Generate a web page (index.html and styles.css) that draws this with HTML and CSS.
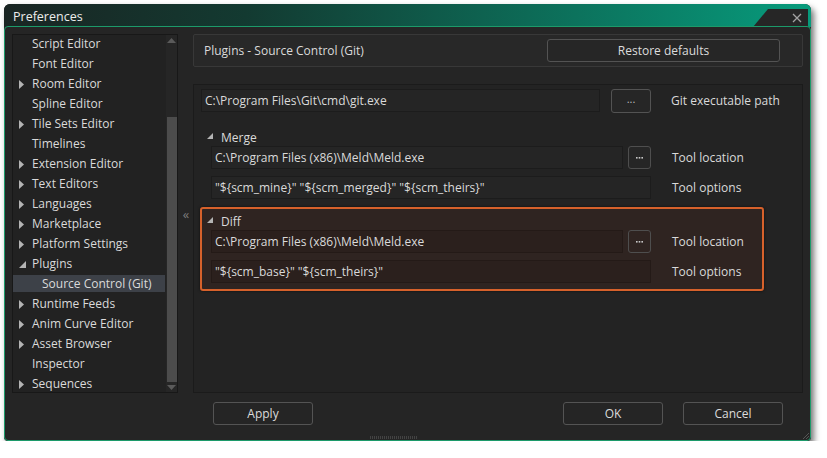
FILE: index.html
```html
<!DOCTYPE html>
<html>
<head>
<meta charset="utf-8">
<title>Preferences</title>
<link rel="stylesheet" href="styles.css">
</head>
<body>
<div class="window">
  <div class="titlebar">
    <span class="title">Preferences</span>
    <div class="close">
      <svg width="10" height="10" viewBox="0 0 10 10"><path d="M1 1L9 9M9 1L1 9" stroke="#a3a3a3" stroke-width="1.3" fill="none"/></svg>
    </div>
  </div>
  <div class="body">
    <div class="tree">
      <div class="tree-items">
        <div class="item"><span class="arr"></span>Script Editor</div>
        <div class="item"><span class="arr"></span>Font Editor</div>
        <div class="item"><span class="arr"><svg width="5" height="9" viewBox="0 0 5 9"><path d="M0 0L5 4.5L0 9Z" fill="#b4b4b4"/></svg></span>Room Editor</div>
        <div class="item"><span class="arr"></span>Spline Editor</div>
        <div class="item"><span class="arr"><svg width="5" height="9" viewBox="0 0 5 9"><path d="M0 0L5 4.5L0 9Z" fill="#b4b4b4"/></svg></span>Tile Sets Editor</div>
        <div class="item"><span class="arr"></span>Timelines</div>
        <div class="item"><span class="arr"><svg width="5" height="9" viewBox="0 0 5 9"><path d="M0 0L5 4.5L0 9Z" fill="#b4b4b4"/></svg></span>Extension Editor</div>
        <div class="item"><span class="arr"><svg width="5" height="9" viewBox="0 0 5 9"><path d="M0 0L5 4.5L0 9Z" fill="#b4b4b4"/></svg></span>Text Editors</div>
        <div class="item"><span class="arr"><svg width="5" height="9" viewBox="0 0 5 9"><path d="M0 0L5 4.5L0 9Z" fill="#b4b4b4"/></svg></span>Languages</div>
        <div class="item"><span class="arr"><svg width="5" height="9" viewBox="0 0 5 9"><path d="M0 0L5 4.5L0 9Z" fill="#b4b4b4"/></svg></span>Marketplace</div>
        <div class="item"><span class="arr"><svg width="5" height="9" viewBox="0 0 5 9"><path d="M0 0L5 4.5L0 9Z" fill="#b4b4b4"/></svg></span>Platform Settings</div>
        <div class="item"><span class="arr"><svg width="7" height="7" viewBox="0 0 7 7"><path d="M7 0L7 7L0 7Z" fill="#b4b4b4"/></svg></span>Plugins</div>
        <div class="item sub selected">Source Control (Git)</div>
        <div class="item"><span class="arr"><svg width="5" height="9" viewBox="0 0 5 9"><path d="M0 0L5 4.5L0 9Z" fill="#b4b4b4"/></svg></span>Runtime Feeds</div>
        <div class="item"><span class="arr"><svg width="5" height="9" viewBox="0 0 5 9"><path d="M0 0L5 4.5L0 9Z" fill="#b4b4b4"/></svg></span>Anim Curve Editor</div>
        <div class="item"><span class="arr"><svg width="5" height="9" viewBox="0 0 5 9"><path d="M0 0L5 4.5L0 9Z" fill="#b4b4b4"/></svg></span>Asset Browser</div>
        <div class="item"><span class="arr"></span>Inspector</div>
        <div class="item"><span class="arr"><svg width="5" height="9" viewBox="0 0 5 9"><path d="M0 0L5 4.5L0 9Z" fill="#b4b4b4"/></svg></span>Sequences</div>
      </div>
      <div class="scrollbar">
        <div class="sb-btn"><svg width="9" height="5" viewBox="0 0 9 5"><path d="M0 5L4.5 0L9 5Z" fill="#5a5a5a"/></svg></div>
        <div class="sb-track"><div class="sb-thumb"></div></div>
        <div class="sb-btn"><svg width="9" height="5" viewBox="0 0 9 5"><path d="M0 0L4.5 5L9 0Z" fill="#5a5a5a"/></svg></div>
      </div>
    </div>

    <div class="splitter">«</div>

    <div class="content">
      <div class="header">
        <span class="header-title">Plugins - Source Control (Git)</span>
        <div class="btn restore">Restore defaults</div>
      </div>
      <div class="panel">
        <div class="git-row">
          <div class="input git-input">C:\Program Files\Git\cmd\git.exe</div>
          <div class="btn dots-wide">...</div>
          <span class="label">Git executable path</span>
        </div>

        <div class="group">
          <div class="group-title"><svg width="6" height="6" viewBox="0 0 6 6"><path d="M6 0L6 6L0 6Z" fill="#b4b4b4"/></svg><span>Merge</span></div>
          <div class="group-row">
            <div class="field-wrap">
              <div class="input">C:\Program Files (x86)\Meld\Meld.exe</div>
              <div class="btn dots"><svg width="7" height="2" viewBox="0 0 7 2"><rect x="0" y="0" width="1.6" height="1.6" fill="#c8c8c8"/><rect x="2.7" y="0" width="1.6" height="1.6" fill="#c8c8c8"/><rect x="5.4" y="0" width="1.6" height="1.6" fill="#c8c8c8"/></svg></div>
            </div>
            <span class="label">Tool location</span>
          </div>
          <div class="group-row">
            <div class="field-wrap">
              <div class="input">"${scm_mine}" "${scm_merged}" "${scm_theirs}"</div>
            </div>
            <span class="label">Tool options</span>
          </div>
        </div>

        <div class="group diff">
          <div class="group-title"><svg width="6" height="6" viewBox="0 0 6 6"><path d="M6 0L6 6L0 6Z" fill="#b4b4b4"/></svg><span>Diff</span></div>
          <div class="group-row">
            <div class="field-wrap">
              <div class="input">C:\Program Files (x86)\Meld\Meld.exe</div>
              <div class="btn dots"><svg width="7" height="2" viewBox="0 0 7 2"><rect x="0" y="0" width="1.6" height="1.6" fill="#c8c8c8"/><rect x="2.7" y="0" width="1.6" height="1.6" fill="#c8c8c8"/><rect x="5.4" y="0" width="1.6" height="1.6" fill="#c8c8c8"/></svg></div>
            </div>
            <span class="label">Tool location</span>
          </div>
          <div class="group-row">
            <div class="field-wrap">
              <div class="input">"${scm_base}" "${scm_theirs}"</div>
            </div>
            <span class="label">Tool options</span>
          </div>
        </div>
      </div>
    </div>

    <div class="footer">
      <div class="btn foot apply">Apply</div>
      <div class="btn foot ok">OK</div>
      <div class="btn foot cancel">Cancel</div>
    </div>

    <div class="drag-handle"></div>
    <div class="grip"></div>
  </div>
</div>
</body>
</html>
```

FILE: styles.css
```css
* { box-sizing: border-box; }

html, body {
  margin: 0;
  padding: 0;
  background: #ffffff;
}

body {
  font-family: "Open Sans", "Noto Sans", "Liberation Sans", sans-serif;
  font-size: 12px;
  color: #dadada;
}

.window {
  margin: 4px 0 0 4px;
  width: 807px;
  border-radius: 6px 6px 4px 4px;
  box-shadow: 3px 4px 6px rgba(0, 0, 0, 0.55);
  background: #252525;
}

.titlebar {
  height: 23px;
  display: flex;
  align-items: flex-end;
  border-radius: 6px 6px 0 0;
  background: linear-gradient(90deg, #1a2523 0%, #133a31 30%, #0d6a56 65%, #079b7c 100%);
  margin-bottom: -1px;
}

.title {
  flex: 1;
  align-self: center;
  padding-left: 9px;
  padding-top: 1px;
  font-size: 12.5px;
  color: #ececec;
}

.close {
  width: 55px;
  height: 18px;
  margin-right: 3px;
  background: #262626;
  clip-path: polygon(15px 0, 100% 0, 100% 100%, 0 100%);
  display: flex;
  align-items: center;
  justify-content: flex-end;
  padding-right: 6px;
  padding-bottom: 1px;
}

.body {
  position: relative;
  border: 1px solid #1c9a6a;
  border-radius: 4px;
  background: #252525;
  display: grid;
  grid-template-columns: 166px 15px 610px;
  grid-template-rows: 359px 23px;
  row-gap: 9px;
  padding: 7px 7px 15px 7px;
}

/* Tree */
.tree {
  display: flex;
  border: 1px solid #181818;
  background: #222222;
  overflow: hidden;
}

.tree-items {
  flex: 1;
  margin-top: -1px;
}

.item {
  height: 20px;
  line-height: 20px;
  display: flex;
  align-items: center;
  white-space: nowrap;
}

.arr {
  width: 19px;
  flex: none;
  display: flex;
  align-items: center;
  padding-left: 6px;
}

.item.sub {
  padding-left: 29px;
  margin-right: 1px;
  background: linear-gradient(#3d4148, #3d4148) 0 1px / 100% 17px no-repeat;
}

.scrollbar {
  width: 11px;
  flex: none;
  display: flex;
  flex-direction: column;
  background: #262626;
}

.sb-btn {
  height: 11px;
  display: flex;
  align-items: center;
  justify-content: center;
}

.sb-track {
  flex: 1;
  padding-top: 72px;
  padding-left: 1px;
}

.sb-thumb {
  height: 265px;
  background: #4c4c4c;
}

/* Splitter */
.splitter {
  display: flex;
  align-items: center;
  justify-content: center;
  color: #7c7c7c;
  font-size: 13px;
  padding-left: 1px;
}

/* Content */
.content {
  display: flex;
  flex-direction: column;
}

.header {
  height: 33px;
  flex: none;
  display: flex;
  align-items: center;
  justify-content: space-between;
  border: 1px solid #383838;
  border-radius: 2px;
  background: #282828;
  padding: 0 22px 0 10px;
}

.header-title {
  font-size: 12px;
}

.btn {
  border: 1px solid #535353;
  border-radius: 3px;
  display: flex;
  align-items: center;
  justify-content: center;
  color: #dcdcdc;
  background: #262626;
}

.restore {
  width: 233px;
  height: 23px;
}

.panel {
  margin-top: 17px;
  flex: 1;
  border: 1px solid #1b1b1b;
  background: #232323;
  padding: 4px 0 0 6px;
}

.git-row {
  display: flex;
  align-items: center;
  height: 23px;
  margin-left: 1px;
}

.input {
  height: 23px;
  line-height: 21px;
  border: 1px solid #1c1c1c;
  background: #252525;
  padding-left: 3px;
  white-space: nowrap;
  overflow: hidden;
}

.git-input {
  width: 399px;
}

.dots-wide {
  width: 40px;
  height: 24px;
  margin-left: 11px;
  font-size: 11px;
  padding-bottom: 4px;
  color: #bcbcbc;
}

.git-row .label {
  margin-left: 20px;
}

.group {
  width: 564px;
  height: 84px;
  border: 2px solid transparent;
  border-radius: 3px;
  padding: 0 0 6px 9px;
}

.git-row + .group {
  margin-top: 11px;
}

.group-title {
  height: 21px;
  display: flex;
  align-items: center;
  padding-top: 3px;
  margin-left: -4px;
}

.group-title svg {
  margin-right: 8px;
  margin-top: -2px;
}

.group-row {
  display: flex;
  align-items: center;
  height: 23px;
}

.group-row + .group-row {
  margin-top: 7px;
}

.field-wrap {
  width: 440px;
  flex: none;
  display: flex;
  height: 23px;
}

.field-wrap .input {
  flex: 1;
}

.dots {
  width: 23px;
  height: 23px;
  margin-left: 5px;
  border-color: #4e4e4e;
  padding-top: 1px;
}

.group-row .label {
  margin-left: 21px;
}

.diff {
  border-color: #d6612b;
  background: #2f2421;
  box-shadow: 0 0 3px rgba(0, 0, 0, 0.6);
}

.diff .input {
  background: #2b201d;
  border-color: #241a17;
}

.diff .dots {
  background: #2f2421;
}

/* Footer */
.footer {
  grid-column: 3;
  display: flex;
  align-items: center;
}

.foot {
  width: 100px;
  height: 23px;
  background: #252525;
  border-color: #545454;
}

.apply { margin-left: 20px; }
.ok { margin-left: auto; }
.cancel { margin-left: 20px; margin-right: 20px; }

.drag-handle {
  position: absolute;
  left: 365px;
  bottom: 1px;
  width: 48px;
  height: 3px;
  background-image: linear-gradient(90deg, #4a4a4a 50%, transparent 50%);
  background-size: 2px 3px;
  opacity: 0.8;
}

.grip {
  position: absolute;
  right: 1px;
  bottom: 1px;
  width: 6px;
  height: 6px;
  background: linear-gradient(135deg, transparent 45%, #555 45%, #555 55%, transparent 55%, transparent 70%, #555 70%, #555 80%, transparent 80%);
}
```
